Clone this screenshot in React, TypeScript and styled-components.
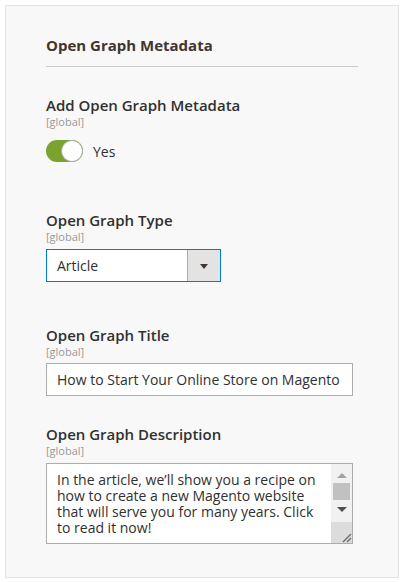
import React from "react";
import styled, { createGlobalStyle } from "styled-components";

const Global = createGlobalStyle`
  html, body { margin: 0; padding: 0; background: #ffffff; }
  body { font-family: "Open Sans", "Noto Sans", Arial, sans-serif; }
  * { box-sizing: border-box; }
`;

const Page = styled.div`
  padding: 5px;
`;

const Panel = styled.section`
  width: 394px;
  height: 573px;
  background: #f8f8f8;
  border: 1px solid #e3e3e3;
  padding: 30px 0 0 40px;
`;

const Title = styled.h2`
  margin: 0;
  font-size: 15px;
  line-height: 19px;
  font-weight: 700;
  color: #41362f;
`;

const Divider = styled.hr`
  margin: 11px 0 0 0;
  width: 312px;
  height: 1px;
  border: 0;
  background: #cccccc;
`;

const Field = styled.div<{ $top: number }>`
  margin-top: ${(p) => p.$top}px;
  display: flex;
  flex-direction: column;
`;

const Label = styled.label`
  font-size: 15px;
  line-height: 19px;
  font-weight: 600;
  color: #303030;
`;

const Scope = styled.span`
  margin-top: -1px;
  font-size: 11px;
  line-height: 15px;
  color: #999999;
`;

const ToggleRow = styled.div`
  margin-top: 11px;
  display: flex;
  align-items: center;
  gap: 10px;
`;

const Track = styled.span`
  position: relative;
  display: block;
  width: 37px;
  height: 22px;
  border-radius: 11px;
  background: #79a22e;
`;

const Knob = styled.span`
  position: absolute;
  right: 0;
  top: 0;
  width: 22px;
  height: 22px;
  border-radius: 50%;
  background: #ffffff;
  border: 1px solid #adadad;
`;

const ToggleText = styled.span`
  font-size: 14px;
  line-height: 19px;
  color: #303030;
`;

const Select = styled.div`
  margin-top: 5px;
  width: 175px;
  height: 33px;
  display: flex;
  border: 1px solid #007bdb;
  background: #ffffff;
`;

const SelectValue = styled.span`
  flex: 1;
  padding-left: 10px;
  display: flex;
  align-items: center;
  font-size: 14px;
  color: #303030;
`;

const SelectButton = styled.span`
  width: 33px;
  display: flex;
  align-items: center;
  justify-content: center;
  background: #e3e3e3;
  border-left: 1px solid #adadad;
`;

const Arrow = styled.span`
  width: 0;
  height: 0;
  border-left: 4px solid transparent;
  border-right: 4px solid transparent;
  border-top: 5px solid #41362f;
  margin-top: 1px;
`;

const Input = styled.div`
  margin-top: 4px;
  width: 307px;
  height: 33px;
  border: 1px solid #adadad;
  background: #ffffff;
  padding-left: 10px;
  display: flex;
  align-items: center;
  font-size: 14px;
  color: #303030;
  white-space: nowrap;
  overflow: hidden;
`;

const TextArea = styled.div`
  margin-top: 5px;
  width: 307px;
  height: 81px;
  border: 1px solid #adadad;
  background: #ffffff;
  display: flex;
`;

const TextBody = styled.div`
  flex: 1;
  padding: 8px 0 0 10px;
  font-size: 14px;
  line-height: 16px;
  color: #303030;
  white-space: pre-line;
  overflow: hidden;
`;

const ScrollBar = styled.div`
  width: 21px;
  display: flex;
  flex-direction: column;
  background: #f1f1f1;
`;

const ScrollTrack = styled.div`
  flex: 1;
  display: flex;
  flex-direction: column;
  align-items: center;
  padding-top: 9px;
`;

const ScrollArrow = styled.span<{ $up?: boolean; $color: string }>`
  width: 0;
  height: 0;
  border-left: 5px solid transparent;
  border-right: 5px solid transparent;
  ${(p) =>
    p.$up
      ? `border-bottom: 5px solid ${p.$color};`
      : `border-top: 5px solid ${p.$color};`}
`;

const Thumb = styled.span`
  width: 17px;
  height: 17px;
  margin: 5px 0 7px;
  background: #c1c1c1;
`;

const Corner = styled.div`
  height: 21px;
  background: #dcdcdc;
  display: flex;
  align-items: flex-end;
  justify-content: flex-end;
`;

export default function App() {
  return (
    <>
      <Global />
      <Page>
        <Panel>
          <Title>Open Graph Metadata</Title>
          <Divider />

          <Field $top={29}>
            <Label>Add Open Graph Metadata</Label>
            <Scope>[global]</Scope>
            <ToggleRow>
              <Track>
                <Knob />
              </Track>
              <ToggleText>Yes</ToggleText>
            </ToggleRow>
          </Field>

          <Field $top={49}>
            <Label>Open Graph Type</Label>
            <Scope>[global]</Scope>
            <Select>
              <SelectValue>Article</SelectValue>
              <SelectButton>
                <Arrow />
              </SelectButton>
            </Select>
          </Field>

          <Field $top={44}>
            <Label>Open Graph Title</Label>
            <Scope>[global]</Scope>
            <Input>How to Start Your Online Store on Magento</Input>
          </Field>

          <Field $top={29}>
            <Label>Open Graph Description</Label>
            <Scope>[global]</Scope>
            <TextArea>
              <TextBody>
                {"In the article, we\u2019ll show you a recipe on\nhow to create a new Magento website\nthat will serve you for many years. Click\nto read it now!"}
              </TextBody>
              <ScrollBar>
                <ScrollTrack>
                  <ScrollArrow $up $color="#a3a3a3" />
                  <Thumb />
                  <ScrollArrow $color="#505050" />
                </ScrollTrack>
                <Corner>
                  <svg width="12" height="12" viewBox="0 0 12 12">
                    <path d="M3 11 L11 3 M7 11 L11 7" stroke="#6b6b6b" strokeWidth="1.3" />
                  </svg>
                </Corner>
              </ScrollBar>
            </TextArea>
          </Field>
        </Panel>
      </Page>
    </>
  );
}
